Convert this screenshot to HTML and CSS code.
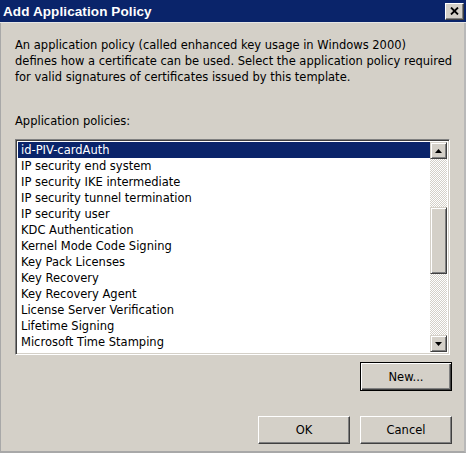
FILE: index.html
```html
<!DOCTYPE html>
<html>
<head>
<meta charset="utf-8">
<link rel="stylesheet" href="styles.css">
</head>
<body>
<div class="window">
  <div class="titlebar">
    <span class="title">Add Application Policy</span>
    <div class="close">
      <svg width="9" height="8" viewBox="0 0 9 8"><path d="M1 0.5 L8 7.5 M8 0.5 L1 7.5" stroke="#000" stroke-width="1.8" fill="none"/></svg>
    </div>
  </div>
  <div class="content">
    <p class="desc">An application policy (called enhanced key usage in Windows 2000)<br>defines how a certificate can be used. Select the application policy required<br>for valid signatures of certificates issued by this template.</p>
    <div class="label">Application policies:</div>
    <div class="listbox">
      <div class="items">
        <div class="item selected">id-PIV-cardAuth</div>
        <div class="item">IP security end system</div>
        <div class="item">IP security IKE intermediate</div>
        <div class="item">IP security tunnel termination</div>
        <div class="item">IP security user</div>
        <div class="item">KDC Authentication</div>
        <div class="item">Kernel Mode Code Signing</div>
        <div class="item">Key Pack Licenses</div>
        <div class="item">Key Recovery</div>
        <div class="item">Key Recovery Agent</div>
        <div class="item">License Server Verification</div>
        <div class="item">Lifetime Signing</div>
        <div class="item">Microsoft Time Stamping</div>
        <div class="item">Microsoft Trust List Signing</div>
      </div>
      <div class="scrollbar">
        <div class="sbtn"><svg width="7" height="4" viewBox="0 0 7 4"><path d="M3.5 0 L7 4 L0 4 Z" fill="#000"/></svg></div>
        <div class="track">
          <div class="thumb"></div>
        </div>
        <div class="sbtn"><svg width="7" height="4" viewBox="0 0 7 4"><path d="M0 0 L7 0 L3.5 4 Z" fill="#000"/></svg></div>
      </div>
    </div>
    <div class="row-new">
      <div class="btn default">New...</div>
    </div>
    <div class="row-actions">
      <div class="btn">OK</div>
      <div class="btn">Cancel</div>
    </div>
  </div>
</div>
</body>
</html>
```
FILE: styles.css
```css
html, body {
  margin: 0;
  padding: 0;
  background: #d4d0c8;
}
.window {
  width: 466px;
  height: 453px;
  box-sizing: border-box;
  background: #d4d0c8;
  border-left: 1px solid #a8a8a8;
  border-right: 2px solid #b8b8b8;
  border-bottom: 2px solid #a8a8a8;
  font-family: "DejaVu Sans", Verdana, sans-serif;
  font-size: 11.5px;
  color: #000;
  display: flex;
  flex-direction: column;
}
.titlebar {
  height: 22px;
  background: #0a246a;
  display: flex;
  align-items: center;
  justify-content: space-between;
  padding: 0 2px 0 3px;
  margin-left: -1px;
  margin-right: -2px;
  border-bottom: 1px solid #e6e6e6;
}
.title {
  color: #fff;
  font-family: "Liberation Sans", Arial, sans-serif;
  font-weight: bold;
  font-size: 13.5px;
  letter-spacing: 0.1px;
}
.close {
  width: 19px;
  height: 17px;
  box-sizing: border-box;
  background: #d4d0c8;
  border-top: 1px solid #fff;
  border-left: 1px solid #fff;
  border-right: 1px solid #404040;
  border-bottom: 1px solid #404040;
  box-shadow: inset -1px -1px 0 #808080;
  display: flex;
  align-items: center;
  justify-content: center;
}
.content {
  flex: 1;
  padding: 0 12px 0 14px;
  display: flex;
  flex-direction: column;
}
.desc {
  margin: 14px 0 0 0;
  line-height: 16px;
  white-space: nowrap;
}
.label {
  margin-top: 28px;
  line-height: 16px;
}
.listbox {
  margin-top: 10px;
  margin-right: 2px;
  height: 216px;
  box-sizing: border-box;
  border-top: 1px solid #808080;
  border-left: 1px solid #808080;
  border-right: 1px solid #fff;
  border-bottom: 1px solid #fff;
  box-shadow: inset 1px 1px 0 #404040, inset -1px -1px 0 #d4d0c8;
  padding: 2px 2px 2px 2px;
  background: #fff;
  display: flex;
}
.items {
  flex: 1;
  overflow: hidden;
}
.item {
  height: 16px;
  line-height: 16px;
  padding-left: 3px;
  white-space: nowrap;
}
.item.selected {
  background: #0a246a;
  color: #fff;
}
.scrollbar {
  width: 17px;
  display: flex;
  flex-direction: column;
}
.sbtn {
  width: 17px;
  height: 17px;
  box-sizing: border-box;
  background: #d4d0c8;
  border-top: 1px solid #d4d0c8;
  border-left: 1px solid #d4d0c8;
  border-right: 1px solid #404040;
  border-bottom: 1px solid #404040;
  box-shadow: inset 1px 1px 0 #fff, inset -1px -1px 0 #808080;
  display: flex;
  align-items: center;
  justify-content: center;
}
.track {
  flex: 1;
  background-color: #d4d0c8;
  background-image: repeating-conic-gradient(#ffffff 0 25%, #d4d0c8 0 50%);
  background-size: 2px 2px;
}
.thumb {
  margin-top: 48px;
  height: 67px;
  box-sizing: border-box;
  background: #d4d0c8;
  border-top: 1px solid #d4d0c8;
  border-left: 1px solid #d4d0c8;
  border-right: 1px solid #404040;
  border-bottom: 1px solid #404040;
  box-shadow: inset 1px 1px 0 #fff, inset -1px -1px 0 #808080;
}
.row-new {
  display: flex;
  justify-content: flex-end;
  margin-top: 7px;
}
.row-actions {
  display: flex;
  justify-content: flex-end;
  gap: 10px;
  margin-top: 25px;
}
.btn {
  width: 92px;
  height: 28px;
  box-sizing: border-box;
  background: #d4d0c8;
  border-top: 1px solid #fff;
  border-left: 1px solid #fff;
  border-right: 1px solid #404040;
  border-bottom: 1px solid #404040;
  box-shadow: inset -1px -1px 0 #808080;
  display: flex;
  align-items: center;
  justify-content: center;
}
.btn.default {
  border: 1px solid #000;
  height: 29px;
  box-shadow: inset 1px 1px 0 #fff, inset -1px -1px 0 #404040, inset -2px -2px 0 #808080;
}
```
